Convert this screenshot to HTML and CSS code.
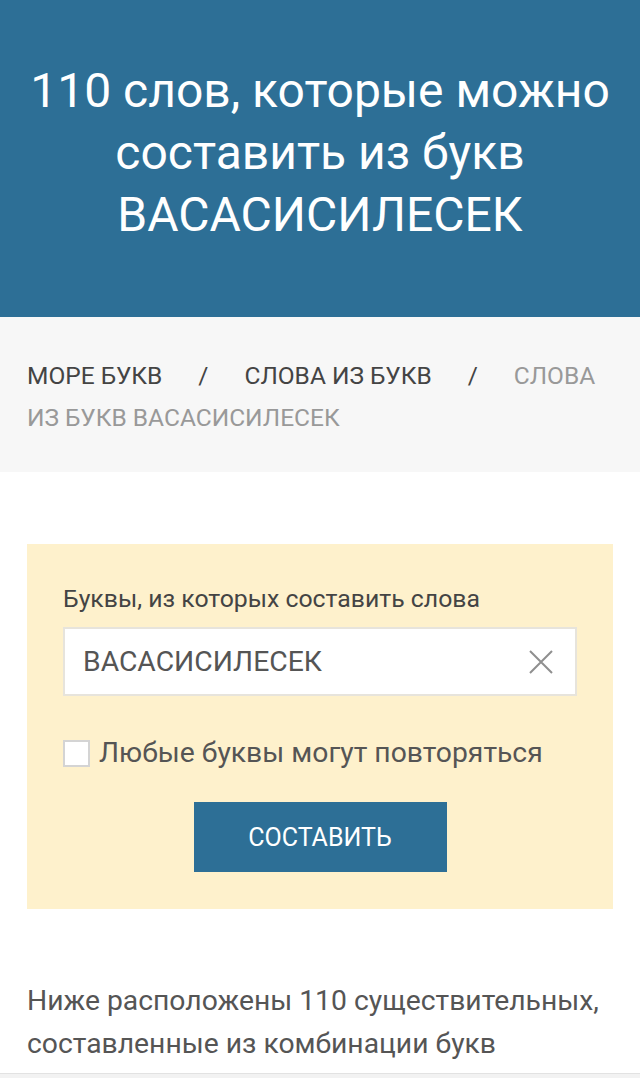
FILE: index.html
```html
<!DOCTYPE html>
<html lang="ru">
<head>
<meta charset="utf-8">
<meta name="viewport" content="width=640">
<title>110 слов из букв ВАСАСИСИЛЕСЕК</title>
<link rel="stylesheet" href="styles.css">
</head>
<body>
<header class="hero">
  <h1 class="hero-title">110 слов, которые можно составить из букв ВАСАСИСИЛЕСЕК</h1>
</header>
<nav class="crumbs">
  <a class="crumb" href="#">МОРЕ БУКВ</a><span class="sep">/</span><a class="crumb" href="#">СЛОВА ИЗ БУКВ</a><span class="sep">/</span><span class="crumb-current">СЛОВА ИЗ БУКВ ВАСАСИСИЛЕСЕК</span>
</nav>
<main class="content">
  <form class="search-box">
    <label class="field-label" for="letters">Буквы, из которых составить слова</label>
    <div class="field">
      <input class="field-input" id="letters" type="text" value="ВАСАСИСИЛЕСЕК">
      <span class="field-clear" aria-label="Очистить">
        <svg viewBox="0 0 24 24" width="24" height="24"><path d="M1 1 L23 23 M23 1 L1 23" stroke="#8f8f8f" stroke-width="2" fill="none"/></svg>
      </span>
    </div>
    <label class="check">
      <span class="check-box"></span>
      <span class="check-text">Любые буквы могут повторяться</span>
    </label>
    <div class="actions">
      <button class="btn" type="button">СОСТАВИТЬ</button>
    </div>
  </form>
  <p class="intro">Ниже расположены 110 существительных, составленные из комбинации букв</p>
</main>
<div class="bottom-bar"></div>
</body>
</html>
```

FILE: styles.css
```css
* { box-sizing: border-box; }
html, body { margin: 0; padding: 0; }
body {
  font-family: Roboto, "Noto Sans", "Liberation Sans", sans-serif;
  background: #ffffff;
  color: #555555;
}
.hero {
  background: #2d6f96;
  padding: 60px 16px 71px;
}
.hero-title {
  margin: 0;
  color: #ffffff;
  font-weight: 400;
  font-size: 48px;
  line-height: 62px;
  text-align: center;
}
.crumbs {
  background: #f7f7f7;
  padding: 38px 27px 33px;
  font-size: 24.5px;
  line-height: 42px;
}
.crumb {
  color: #444444;
  text-decoration: none;
}
.sep {
  color: #444444;
  margin: 0 36px;
}
.crumb-current { color: #999999; }
.content {
  padding: 72px 27px 0;
}
.search-box {
  background: #fef1cc;
  padding: 40px 36px 37px;
  display: flex;
  flex-direction: column;
}
.field-label {
  font-size: 24.8px;
  line-height: 30px;
  height: 30px;
  color: #444444;
}
.field {
  margin-top: 13px;
  background: #ffffff;
  border: 2px solid #e7e4dc;
  height: 69px;
  display: flex;
  align-items: center;
  padding: 0 22px 0 18px;
}
.field-input {
  flex: 1;
  min-width: 0;
  border: 0;
  outline: none;
  background: transparent;
  font-family: inherit;
  font-size: 28.3px;
  color: #555555;
  padding: 0;
}
.field-clear {
  display: flex;
  width: 24px;
  height: 24px;
}
.check {
  margin-top: 42px;
  height: 30px;
  display: flex;
  align-items: center;
  gap: 9px;
}
.check-box {
  flex: none;
  width: 27px;
  height: 27px;
  background: #ffffff;
  border: 2px solid #d4d4d4;
}
.check-text {
  font-size: 28.3px;
  line-height: 30px;
  color: #555555;
}
.actions {
  margin-top: 34px;
  display: flex;
  justify-content: center;
}
.btn {
  background: #2d6f96;
  color: #ffffff;
  border: 0;
  width: 253px;
  height: 70px;
  font-family: inherit;
  font-size: 25px;
  padding: 0;
}
.intro {
  margin: 70px 0 0;
  font-size: 28.3px;
  line-height: 43px;
  color: #555555;
}
.bottom-bar {
  position: fixed;
  left: 0;
  right: 0;
  bottom: 0;
  height: 5px;
  background: #f2f2f2;
  border-top: 1px solid #e2e2e2;
}
```
